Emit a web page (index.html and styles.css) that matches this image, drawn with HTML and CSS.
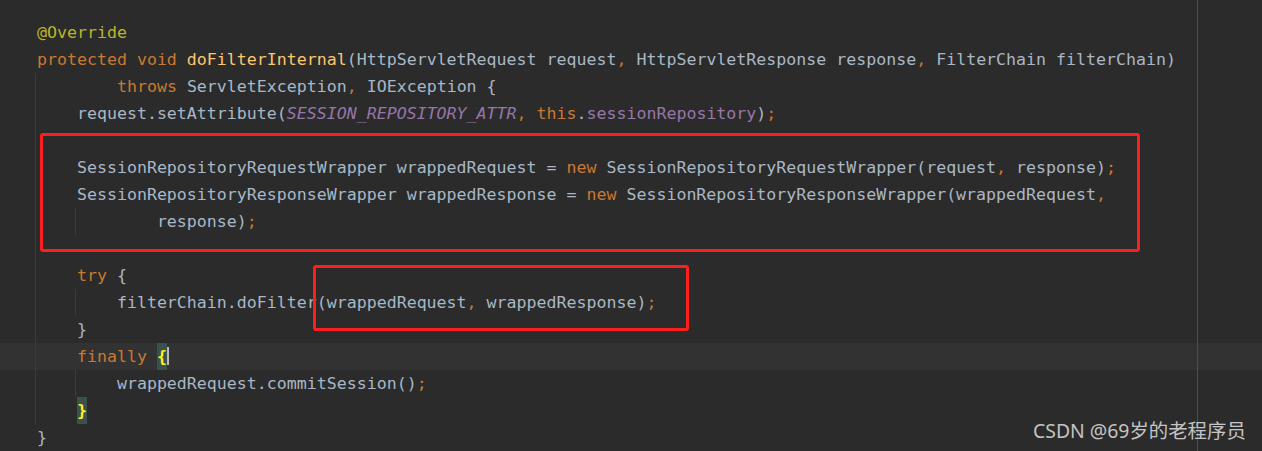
FILE: index.html
```html
<!DOCTYPE html>
<html lang="en">
<head>
    <meta charset="UTF-8">
    <meta name="viewport" content="width=device-width, initial-scale=1.0">
    <title>doFilterInternal</title>
    <link rel="stylesheet" href="styles.css">
</head>
<body>
    <div class="editor">
        <div class="code">
            <div class="line"><span class="ann">@Override</span></div>
            <div class="line"><span class="kw">protected void </span><span class="fn">doFilterInternal</span>(HttpServletRequest request<span class="kw">, </span>HttpServletResponse response<span class="kw">, </span>FilterChain filterChain)</div>
            <div class="line g1">        <span class="kw">throws </span>ServletException<span class="kw">, </span>IOException {</div>
            <div class="line g1">    request.setAttribute(<span class="const">SESSION_REPOSITORY_ATTR</span><span class="kw">, this</span>.<span class="field">sessionRepository</span>)<span class="kw">;</span></div>
            <div class="line g1"> </div>
            <div class="line g1">    SessionRepositoryRequestWrapper wrappedRequest = <span class="kw">new </span>SessionRepositoryRequestWrapper(request<span class="kw">, </span>response)<span class="kw">;</span></div>
            <div class="line g1">    SessionRepositoryResponseWrapper wrappedResponse = <span class="kw">new </span>SessionRepositoryResponseWrapper(wrappedRequest<span class="kw">,</span></div>
            <div class="line g2">            response)<span class="kw">;</span></div>
            <div class="line g1"> </div>
            <div class="line g1">    <span class="kw">try </span>{</div>
            <div class="line g2">        filterChain.doFilter(wrappedRequest<span class="kw">, </span>wrappedResponse)<span class="kw">;</span></div>
            <div class="line g1">    }</div>
            <div class="line g1 current">    <span class="kw">finally </span><span class="match">{</span><span class="caret"></span></div>
            <div class="line g2">        wrappedRequest.commitSession()<span class="kw">;</span></div>
            <div class="line g1">    <span class="match">}</span></div>
            <div class="line">}</div>
        </div>

        <div class="mark mark-create"></div>
        <div class="mark mark-call"></div>
        <div class="margin"></div>
        <div class="watermark">CSDN @69岁的老程序员</div>
    </div>
</body>
</html>
```

FILE: styles.css
```css
* {
    box-sizing: border-box;
    margin: 0;
    padding: 0;
}

body {
    background: #2b2b2b;
    overflow: hidden;
}

.editor {
    position: relative;
    width: 1262px;
    height: 451px;
    background: #2b2b2b;
    overflow: hidden;
}

.code {
    padding-top: 18.5px;
    font-family: "DejaVu Sans Mono", "Liberation Mono", monospace;
    font-size: 16.6px;
    color: #a9b7c6;
}

.line {
    height: 27px;
    line-height: 27px;
    padding-left: 37px;
    white-space: pre;
}

/* indent guides */
.g1 {
    background: linear-gradient(#3b3b3b, #3b3b3b) no-repeat 35px 0 / 1px 100%;
}

.g2 {
    background:
        linear-gradient(#3b3b3b, #3b3b3b) no-repeat 35px 0 / 1px 100%,
        linear-gradient(#3b3b3b, #3b3b3b) no-repeat 75px 0 / 1px 100%;
}

.line.current {
    background-color: #323232;
}

.kw {
    color: #cc7832;
}

.ann {
    color: #bbb529;
}

.fn {
    color: #ffc66d;
}

.const {
    color: #9876aa;
    font-style: italic;
}

.field {
    color: #9876aa;
}

.match {
    display: inline-block;
    height: 27px;
    background: #3b514d;
    color: #ffef28;
    font-weight: bold;
}

.caret {
    display: inline-block;
    width: 2px;
    height: 18px;
    vertical-align: -3px;
    background: #bbbbbb;
}

.mark {
    position: absolute;
    border: 3px solid #ff1e1e;
    border-radius: 3px;
}

.mark-create {
    left: 40px;
    top: 133px;
    width: 1100px;
    height: 119px;
}

.mark-call {
    left: 313px;
    top: 265px;
    width: 376px;
    height: 66px;
}

.margin {
    position: absolute;
    left: 1197px;
    top: 0;
    width: 1px;
    height: 100%;
    background: #4e4e4e;
}

.watermark {
    position: absolute;
    left: 1033px;
    top: 418px;
    font-family: "Noto Sans", "Noto Sans CJK SC", sans-serif;
    font-size: 19.4px;
    line-height: 26px;
    color: rgba(225, 225, 225, 0.85);
}
```
